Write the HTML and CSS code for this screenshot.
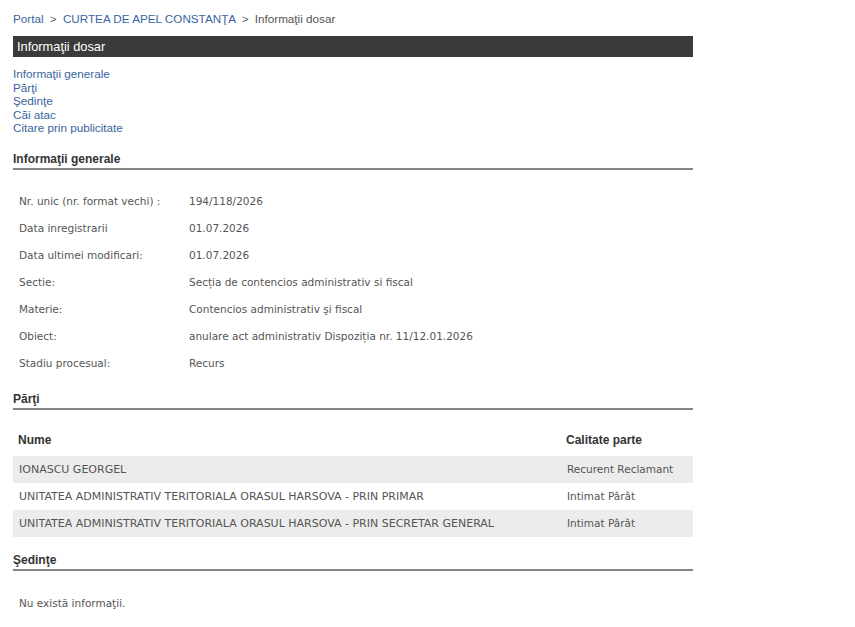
FILE: index.html
```html
<!DOCTYPE html>
<html lang="ro">
<head>
  <meta charset="UTF-8">
  <title>Informaţii dosar</title>
  <link rel="stylesheet" href="styles.css">
</head>
<body>
  <div class="page">
    <div class="breadcrumb">
      <a href="#">Portal</a>
      <span class="sep">&gt;</span>
      <a href="#">CURTEA DE APEL CONSTANŢA</a>
      <span class="sep">&gt;</span>
      <span class="current">Informaţii dosar</span>
    </div>

    <div class="title-bar">Informaţii dosar</div>

    <ul class="toc">
      <li><a href="#generale">Informaţii generale</a></li>
      <li><a href="#parti">Părţi</a></li>
      <li><a href="#sedinte">Şedinţe</a></li>
      <li><a href="#cai">Căi atac</a></li>
      <li><a href="#citare">Citare prin publicitate</a></li>
    </ul>

    <h2 class="section-title first-title" id="generale">Informaţii generale</h2>
    <table class="info">
      <tr><td class="label">Nr. unic (nr. format vechi) :</td><td>194/118/2026</td></tr>
      <tr><td class="label">Data inregistrarii</td><td>01.07.2026</td></tr>
      <tr><td class="label">Data ultimei modificari:</td><td>01.07.2026</td></tr>
      <tr><td class="label">Sectie:</td><td>Secția de contencios administrativ si fiscal</td></tr>
      <tr><td class="label">Materie:</td><td>Contencios administrativ şi fiscal</td></tr>
      <tr><td class="label">Obiect:</td><td>anulare act administrativ Dispoziția nr. 11/12.01.2026</td></tr>
      <tr><td class="label">Stadiu procesual:</td><td>Recurs</td></tr>
    </table>

    <h2 class="section-title parti-title" id="parti">Părţi</h2>
    <table class="parties">
      <thead>
        <tr><th>Nume</th><th class="role">Calitate parte</th></tr>
      </thead>
      <tbody>
        <tr><td>IONASCU GEORGEL</td><td class="role">Recurent Reclamant</td></tr>
        <tr><td>UNITATEA ADMINISTRATIV TERITORIALA ORASUL HARSOVA - PRIN PRIMAR</td><td class="role">Intimat Pârât</td></tr>
        <tr><td>UNITATEA ADMINISTRATIV TERITORIALA ORASUL HARSOVA - PRIN SECRETAR GENERAL</td><td class="role">Intimat Pârât</td></tr>
      </tbody>
    </table>

    <h2 class="section-title sedinte-title" id="sedinte">Şedinţe</h2>
    <p class="empty">Nu există informaţii.</p>
  </div>
</body>
</html>
```

FILE: styles.css
```css
body {
  margin: 0;
  background: #ffffff;
  font-family: "Liberation Sans", Arial, sans-serif;
  color: #333;
}

.page {
  width: 680px;
  padding: 12px 0 0 13px;
}

a {
  color: #3a65a0;
  text-decoration: none;
}

.breadcrumb {
  font-size: 11.7px;
  line-height: 14px;
  color: #555;
}

.breadcrumb .sep {
  margin: 0 3px 0 3px;
  color: #666;
}

.title-bar {
  margin-top: 10px;
  height: 21px;
  line-height: 21px;
  background: #3b3b3b;
  color: #fff;
  font-size: 12.8px;
  padding-left: 4px;
}

.toc {
  list-style: none;
  margin: 10px 0 0 0;
  padding: 0;
  font-size: 11.7px;
  line-height: 13.5px;
}

.section-title {
  margin: 16px 0 0 0;
  padding-bottom: 2px;
  font-size: 12px;
  line-height: 14px;
  font-weight: bold;
  color: #333;
  border-bottom: 2px solid #858585;
}

.first-title {
  margin-top: 17px;
}

.parti-title {
  margin-top: 15px;
}

.info,
.parties {
  width: 680px;
  border-collapse: collapse;
  font-family: "DejaVu Sans", Verdana, sans-serif;
  font-size: 10.5px;
  color: #555;
}

.info {
  margin-top: 18px;
}

.info td {
  height: 27px;
  padding: 0 0 0 6px;
  vertical-align: middle;
}

.info td.label {
  width: 164px;
}

.parties {
  margin-top: 18px;
}

.parties th {
  height: 25px;
  padding: 0 0 3px 5px;
  text-align: left;
  font-family: "Liberation Sans", Arial, sans-serif;
  font-size: 12px;
  font-weight: bold;
  color: #333;
}

.parties td {
  height: 27px;
  padding: 0 0 0 6px;
}

.parties td:first-child {
  font-size: 11px;
}

.parties .role {
  width: 126px;
}

.parties tbody tr:nth-child(odd) {
  background: #ececec;
}

.sedinte-title {
  margin-top: 16px;
}

.empty {
  margin: 26px 0 0 6px;
  font-family: "DejaVu Sans", Verdana, sans-serif;
  font-size: 10.5px;
  color: #555;
}
```
